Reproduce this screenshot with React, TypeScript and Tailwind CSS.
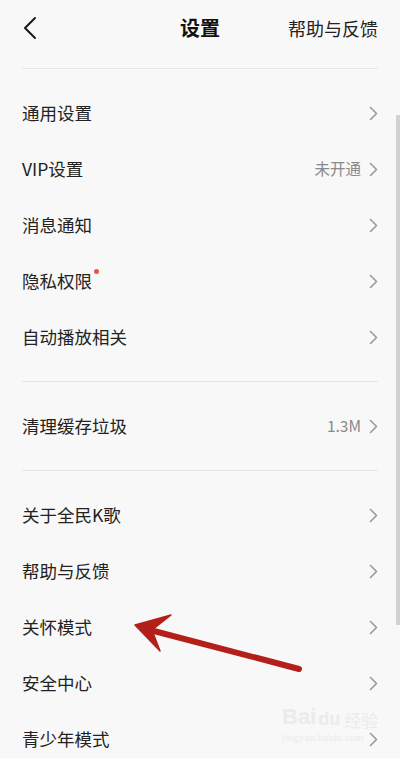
import React from "react";

const Chevron = () => (
  <svg width="9" height="15" viewBox="0 0 9 15" className="shrink-0">
    <polyline points="1.5,1.5 7.5,7.5 1.5,13.5" fill="none" stroke="#9a9a9a" strokeWidth="1.6" strokeLinecap="round" strokeLinejoin="round" />
  </svg>
);

type RowProps = { label: string; value?: string; dot?: boolean };

const Row = ({ label, value, dot }: RowProps) => (
  <div className="h-[56px] flex items-center justify-between pl-[22px] pr-[22px]">
    <div className="relative text-[17.5px] text-[#222] leading-none">
      {label}
      {dot && <span className="absolute -right-[7px] -top-[3px] w-[5px] h-[5px] rounded-full bg-[#e2574c]" />}
    </div>
    <div className="flex items-center gap-[8px]">
      {value && <span className="text-[15.5px] text-[#8a8a8a] leading-none">{value}</span>}
      <Chevron />
    </div>
  </div>
);

const Divider = () => <div className="mx-[22px] h-px bg-[#e6e6e6]" />;

export default function App() {
  return (
    <div
      className="relative w-[400px] h-[758px] overflow-hidden bg-[#f8f8f8]"
      style={{ fontFamily: '"Noto Sans CJK SC", "Noto Sans", sans-serif' }}
    >
      <div className="h-[56px] relative flex items-center justify-between pl-[22px] pr-[22px]">
        <svg width="16" height="24" viewBox="0 0 16 24">
          <polyline points="13,2 3,12 13,22" fill="none" stroke="#1a1a1a" strokeWidth="2" strokeLinecap="round" strokeLinejoin="round" />
        </svg>
        <div className="absolute left-0 right-0 text-center text-[20px] font-bold text-[#111] leading-none pointer-events-none">设置</div>
        <div className="text-[18px] text-[#222] leading-none">帮助与反馈</div>
      </div>
      <div className="mt-3">
        <Divider />
      </div>
      <div className="py-4">
        <Row label="通用设置" />
        <Row label="VIP设置" value="未开通" />
        <Row label="消息通知" />
        <Row label="隐私权限" dot />
        <Row label="自动播放相关" />
      </div>
      <Divider />
      <div className="py-4">
        <Row label="清理缓存垃圾" value="1.3M" />
      </div>
      <Divider />
      <div className="py-4">
        <Row label="关于全民K歌" />
        <Row label="帮助与反馈" />
        <Row label="关怀模式" />
        <Row label="安全中心" />
        <Row label="青少年模式" />
      </div>

      {/* scrollbar */}
      <div className="absolute left-[396px] top-[115px] w-[4px] h-[510px] bg-[#d2d2d2]" />

      {/* red arrow annotation */}
      <svg className="absolute left-0 top-0" width="400" height="758" viewBox="0 0 400 758">
        <line x1="150" y1="630" x2="299" y2="669" stroke="#b51f1a" strokeWidth="6" strokeLinecap="round" />
        <polygon points="135,625 171,615 152,630 160,651" fill="#b51f1a" stroke="#b51f1a" strokeWidth="1.5" strokeLinejoin="round" />
      </svg>

      {/* watermark */}
      <div className="absolute left-[282px] top-[706px] flex flex-col items-start opacity-60 pointer-events-none">
        <div className="flex items-end leading-none" style={{ fontFamily: '"Liberation Sans", sans-serif' }}>
          <span className="text-[22px] font-bold text-[#e4e4e4]">Bai</span>
          <span className="text-[18px] font-bold text-[#e4e4e4] ml-[2px]">du</span>
          <span className="text-[17px] text-[#e4e4e4] ml-[4px]" style={{ fontFamily: '"Noto Sans CJK SC", sans-serif' }}>经验</span>
        </div>
        <div className="text-[11px] text-[#e4e4e4] leading-none mt-[4px]" style={{ fontFamily: '"Liberation Serif", serif' }}>jingyan.baidu.com</div>
      </div>
    </div>
  );
}
